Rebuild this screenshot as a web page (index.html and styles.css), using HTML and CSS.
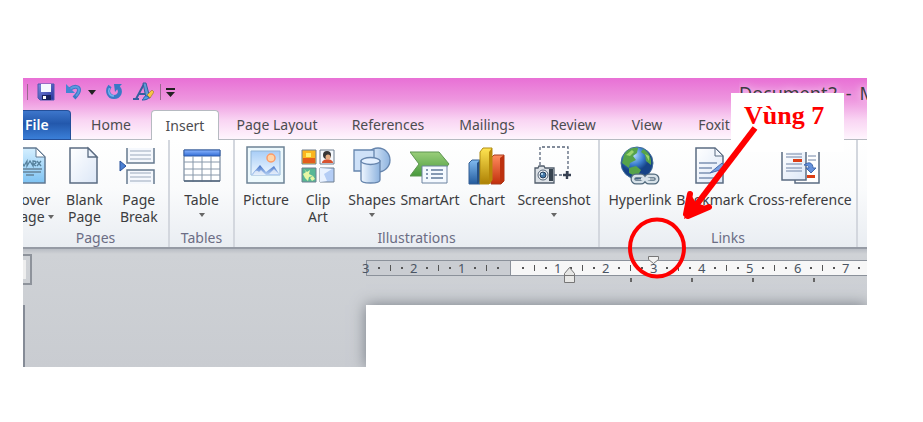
FILE: index.html
```html
<!DOCTYPE html>
<html lang="en">
<head>
<meta charset="utf-8">
<title>Document2</title>
<link rel="stylesheet" href="styles.css">
</head>
<body>
<main class="figure">
<div class="window">
<header class="top">
  <div class="titlebar">
    <div class="quick">
      <i class="sep"></i>
      <button class="q-save" aria-label="Save"><svg width="18" height="18" viewBox="0 0 18 18"><defs><linearGradient id="sv" x2="1" y2="1"><stop stop-color="#7c8bdd"/><stop offset="1" stop-color="#25329b"/></linearGradient></defs><path d="M1 1h16v16H3l-2-2z" fill="url(#sv)" stroke="#4c58b0"/><path d="M4 1h10v8H4z" fill="#f4f8ff"/><path d="M5 12h9v5H5z" fill="#18225d"/><path d="M6 13h3v3H6z" fill="#fff"/></svg></button>
      <button class="q-undo" aria-label="Undo"><svg width="17" height="18" viewBox="0 0 17 18"><path d="M5 6c4-3 9-3 9 1 0 3-2 5-5 8" fill="none" stroke="#3b78c6" stroke-width="4"/><path d="M5 6c4-3 9-3 9 1 0 2-1 4-3 6" fill="none" stroke="#5c9ae0" stroke-width="2"/><path d="M1 1v9h9z" fill="#4386d4"/></svg></button>
      <button class="q-more" aria-label="Undo list"><svg width="8" height="5" viewBox="0 0 8 5"><path d="M0 0h8L4 5z" fill="#222"/></svg></button>
      <button class="q-redo" aria-label="Repeat"><svg width="17" height="18" viewBox="0 0 17 18"><path d="M4 3c-4 5-1 11 4 11s8-5 4-10" fill="none" stroke="#397bc7" stroke-width="4"/><path d="M3.500 5c-2 4 0 8 4.500 8" fill="none" stroke="#72b1ee" stroke-width="1.600"/><path d="M8 1h8l-3 3-4 5z" fill="#3978c5"/></svg></button>
      <button class="q-font" aria-label="Text effects"><svg width="21" height="20" viewBox="0 0 21 20"><path d="M0 17h6M3 17L11 2M6 12h8" fill="none" stroke="#345f9f" stroke-width="2"/><path d="M10 1h3l4 15h-4z" fill="#5d9bd6" stroke="#345f9f"/><path d="M14 13l5-5 2 2-4 6z" fill="#f7c544" stroke="#997027" stroke-width=".6"/><path d="M9 18c2-1 2-5 5-4s2 4-5 4z" fill="#4f9de6" stroke="#2461a6"/></svg></button>
      <i class="sep"></i>
      <button class="q-custom" aria-label="Customize toolbar"><svg width="9" height="9" viewBox="0 0 9 9"><path d="M0 0h9v2H0zM0 4h9L4.500 9z" fill="#222"/></svg></button>
    </div>
    <h1 class="title"><span>Document2</span><span>-</span><span>M</span></h1>
  </div>
  <nav class="tabs">
    <button class="tab file"><span>File</span></button>
    <button class="tab">Home</button>
    <button class="tab active">Insert</button>
    <button class="tab">Page Layout</button>
    <button class="tab">References</button>
    <button class="tab">Mailings</button>
    <button class="tab">Review</button>
    <button class="tab">View</button>
    <button class="tab">Foxit</button>
  </nav>
</header>

<div class="ribbon">
  <section class="group">
    <div class="tools pages">
      <button class="tool cut"><svg class="icon" width="40" height="40" viewBox="0 0 40 40"><defs><linearGradient id="cv" x2="0" y2="1"><stop stop-color="#d5efff"/><stop offset="1" stop-color="#7ec3f3"/></linearGradient></defs><path d="M0 2h26l9 9v26H0z" fill="url(#cv)" stroke="#607891" stroke-width="1.500"/><path d="M26 2v9h9z" fill="#fff" stroke="#607891"/><path d="M8 20l3-5 3 5 3-5v5l3-5 3 5v-5c4 0 4 3 0 3l3 2M27 15l4 5M31 15l-4 5" fill="none" stroke="#56819c" stroke-width="1.300"/><path d="M7 23h25M11 26h20M16 29h8" stroke="#66849a" stroke-width="1.500"/></svg><span>Cover</span><span class="drop">Page <b></b></span></button>
      <button class="tool"><svg class="icon" width="40" height="40" viewBox="0 0 40 40"><defs><linearGradient id="pg" x2="1" y2="1"><stop stop-color="#fff"/><stop offset="1" stop-color="#dce7f7"/></linearGradient></defs><path d="M6 2h18l9 9v26H6z" fill="url(#pg)" stroke="#5b6c82" stroke-width="1.500"/><path d="M24 2v9h9z" fill="#edf4fd" stroke="#5b6c82" stroke-width="1.300"/></svg><span>Blank</span><span>Page</span></button>
      <button class="tool"><svg class="icon" width="40" height="40" viewBox="0 0 40 40"><g fill="#f5f8fd" stroke="#65798f"><path d="M8 2v15h27V2M8 38V24h27v14" stroke-width="1.500"/><path d="M11 5h21M11 9h21M11 13h21M11 27h21M11 31h21M11 35h21" stroke="#9ba9bc"/></g><path d="M1 15l6 5-6 5z" fill="#4b80d4" stroke="#28509a"/></svg><span>Page</span><span>Break</span></button>
    </div>
    <h2>Pages</h2>
  </section>
  <section class="group">
    <div class="tools single">
      <button class="tool"><svg class="icon" width="40" height="40" viewBox="0 0 40 40"><defs><linearGradient id="tb" x2="0" y2="1"><stop stop-color="#8bb5ff"/><stop offset="1" stop-color="#306bd5"/></linearGradient></defs><path d="M2 4h36v31H2z" fill="#fff" stroke="#61758c"/><path d="M2 4h36v6H2z" fill="url(#tb)" stroke="#315ca9"/><path d="M2 16h36M2 23h36M2 29h36M11 10v26M20 10v26M29 10v26" stroke="#8898aa"/><path d="M2 35h36" stroke="#53667d" stroke-width="1.500"/></svg><span>Table</span><b></b></button>
    </div>
    <h2>Tables</h2>
  </section>
  <section class="group">
    <div class="tools art">
      <button class="tool"><svg class="icon" width="40" height="40" viewBox="0 0 40 40"><defs><linearGradient id="sky" x2="0" y2="1"><stop stop-color="#a8cdf7"/><stop offset="1" stop-color="#eff8ff"/></linearGradient><linearGradient id="mt" x2="0" y2="1"><stop stop-color="#416fc7"/><stop offset="1" stop-color="#b6d2f4"/></linearGradient></defs><path d="M1 1h37v36H1z" fill="#edf9fd" stroke="#6d8395" stroke-width="1.500"/><path d="M5 5h29v24H5z" fill="url(#sky)" stroke="#91b3d5"/><circle cx="25" cy="12" r="4" fill="#ffd5a9" stroke="#fc9b68" stroke-width="1.500"/><path d="M5 29l9-10 6 7 8-6 6 9z" fill="url(#mt)"/><path d="M7 29c2-5 4-5 6-3l2-2 5 5zM23 28l5-5 5 5z" fill="#fff" fill-opacity=".65"/></svg><span>Picture</span></button>
      <button class="tool"><svg class="icon" width="40" height="40" viewBox="0 0 40 40"><path d="M4 4h14v14H4z" fill="#fbb51e" stroke="#6e7e90"/><path d="M5 12h12v5H5z" fill="#e35c1d"/><path d="M8 7h5v4H8z" fill="#fff06c"/><path d="M22 4h14v14H22z" fill="#f7fafe" stroke="#6e7e90"/><path d="M24 17c0-5 11-5 11 0z" fill="#d7522f"/><circle cx="29" cy="9" r="4" fill="#373536"/><circle cx="30" cy="11" r="2.500" fill="#e5ad83"/><path d="M4 22h14v14H4z" fill="#58b795" stroke="#6e7e90"/><path d="M6 23l3 3 3-2-1 4 4 2-4 1-1 4-3-3-2-4 3-2zM15 30l2 3-3 2-2-3z" fill="#e8f7a4"/><path d="M22 22h14v14H22z" fill="#b4cdf5" stroke="#6e7e90"/><path d="M22 22l12 1-8 5 3 7-7 1z" fill="#e9f2ff"/></svg><span>Clip</span><span>Art</span></button>
      <button class="tool"><svg class="icon" width="40" height="40" viewBox="0 0 40 40"><defs><linearGradient id="sh" x2="1"><stop stop-color="#f0f7ff"/><stop offset="1" stop-color="#8db3df"/></linearGradient></defs><circle cx="26" cy="14" r="12" fill="url(#sh)" stroke="#6685ad" stroke-width="1.300"/><path d="M2 4h20v21H2z" fill="#cee1f8" stroke="#6685ad" stroke-width="1.300"/><path d="M9 15v19c0 4 19 4 19 0V15z" fill="url(#sh)" stroke="#6685ad" stroke-width="1.300"/><ellipse cx="18.500" cy="15" rx="9.500" ry="3.500" fill="#e4f0ff" stroke="#6685ad" stroke-width="1.300"/></svg><span>Shapes</span><b></b></button>
      <button class="tool"><svg class="icon" width="40" height="40" viewBox="0 0 40 40"><defs><linearGradient id="sm" x2="0" y2="1"><stop stop-color="#9ace7a"/><stop offset="1" stop-color="#489a3c"/></linearGradient></defs><path d="M0 6h29l10 12-10 12H0l9-12z" fill="url(#sm)" stroke="#5d9550"/><path d="M12 20h25v17H12z" fill="#f4f9ff" stroke="#6c83a0"/><path d="M21 24h12M21 28h12M21 32h12M16 24h2M16 28h2M16 32h2" stroke="#60799a" stroke-width="1.500"/></svg><span>SmartArt</span></button>
      <button class="tool"><svg class="icon" width="40" height="40" viewBox="0 0 40 40"><defs><linearGradient id="bl" x2="0" y2="1"><stop stop-color="#80baf0"/><stop offset="1" stop-color="#245b9d"/></linearGradient><linearGradient id="yl" x2="0" y2="1"><stop stop-color="#ffe451"/><stop offset="1" stop-color="#ad8004"/></linearGradient><linearGradient id="rd" x2="0" y2="1"><stop stop-color="#ff8c5e"/><stop offset="1" stop-color="#c12e0b"/></linearGradient></defs><path d="M2 17l3-3h8v24H2z" fill="url(#bl)" stroke="#355f93"/><path d="M10 17l3-3v21l-3 3z" fill="#255086"/><path d="M24 12l3-3h10v26l-3 3H24z" fill="url(#rd)" stroke="#a63b20"/><path d="M33 12l4-3v26l-4 3z" fill="#bd310f"/><path d="M13 6l3-4h9v32l-3 4h-9z" fill="url(#yl)" stroke="#b18c12"/><path d="M22 6l3-4v32l-3 4z" fill="#b78808"/></svg><span>Chart</span></button>
      <button class="tool"><svg class="icon" width="40" height="40" viewBox="0 0 40 40"><path d="M6 19V1h28v28H20" fill="none" stroke="#59667a" stroke-width="1.300" stroke-dasharray="3 2"/><path d="M29 29h8M33 25v8" stroke="#374152" stroke-width="2.400"/><path d="M1 22h3l1-2h5l1 2h9v15H1z" fill="#dce1e6" stroke="#525e6c" stroke-width="1.300"/><path d="M15 23h4v12h-4z" fill="#36434f"/><circle cx="9" cy="29" r="5" fill="#f6f9fc" stroke="#526174"/><circle cx="9" cy="29" r="3" fill="#4579a9" stroke="#253c58"/><circle cx="8" cy="28" r="1" fill="#cbecff"/></svg><span>Screenshot</span><b></b></button>
    </div>
    <h2>Illustrations</h2>
  </section>
  <section class="group">
    <div class="tools links">
      <button class="tool"><svg class="icon" width="40" height="40" viewBox="0 0 40 40"><defs><radialGradient id="gl" cx=".4" cy=".25"><stop stop-color="#b5dcff"/><stop offset=".6" stop-color="#3d80d1"/><stop offset="1" stop-color="#164387"/></radialGradient></defs><circle cx="17" cy="17" r="16" fill="url(#gl)" stroke="#426c98"/><path d="M4 9C7 3 13 1 18 2l-1 5-4 3 3 4-6 3-1 5-7-5zM23 3c6 3 9 9 8 16l-5-4-1-6-4-3zM9 22l7-2 5 4-4 7-8-4z" fill="#56a34a"/><path d="M6 9l6-5 2 2-4 4zM25 8l4 2v5z" fill="#9bd56c"/><g fill="none" stroke="#526a7d" stroke-width="5"><rect x="13" y="30" width="11" height="6" rx="3"/><rect x="26" y="30" width="11" height="6" rx="3"/></g><g fill="none" stroke="#d7e2e9" stroke-width="2.500"><rect x="13" y="30" width="11" height="6" rx="3"/><rect x="26" y="30" width="11" height="6" rx="3"/><path d="M21 33h9"/></g></svg><span>Hyperlink</span></button>
      <button class="tool"><svg class="icon" width="40" height="40" viewBox="0 0 40 40"><path d="M6 2h19l8 8v27H6z" fill="url(#pg)" stroke="#5b6c82" stroke-width="1.500"/><path d="M25 2v8h8z" fill="#f3f7fd" stroke="#5b6c82"/><path d="M9 17h18M9 22h13M9 27h11M9 32h18" stroke="#7c91b2" stroke-width="1.300"/><path d="M20 27l12-10 5 6-7 1-10 3" fill="#789edf" stroke="#4668a9"/></svg><span>Bookmark</span></button>
      <button class="tool"><svg class="icon" width="40" height="40" viewBox="0 0 40 40"><path d="M15 5h24v32H15z" fill="#fff" stroke="#5b6c82" stroke-width="1.500"/><path d="M2 5h24v29H2z" fill="url(#pg)" stroke="#5b6c82" stroke-width="1.500"/><path d="M6 8h16M6 11h16M6 18h16M6 22h16M6 25h16M28 10h8M28 14h8" stroke="#7184a6"/><path d="M13 13h9v3h-9zM27 29h8v3h-8z" fill="#dd3e15"/><path d="M24 19c5-4 9-2 9 3h3l-5 5-5-5h3c0-2-2-3-5-3z" fill="#6591db" stroke="#4269ad"/></svg><span>Cross-reference</span></button>
    </div>
    <h2>Links</h2>
  </section>
</div>

<div class="workspace">
  <div class="side"><i class="corner"></i><i class="vrule"></i></div>
  <div class="canvas">
    <div class="ruler">
      <ol class="units"><li>3</li><li>2</li><li>1</li><li></li><li>1</li><li>2</li><li>3</li><li>4</li><li>5</li><li>6</li><li>7</li></ol>
      <svg class="indent left" width="13" height="18" viewBox="0 0 13 18"><path d="M1.500 7.500l5-6 5 6v9h-10z" fill="#e7e7e5" stroke="#777"/><path d="M1 9.500h11" stroke="#777"/></svg>
      <svg class="indent first" width="13" height="10" viewBox="0 0 13 10"><path d="M1.500 1.500h10v3l-5 4-5-4z" fill="#f1f1f1" stroke="#777"/></svg>
    </div>
    <div class="ticks"></div>
    <article class="page"></article>
  </div>
</div>
</div>
<aside class="callout">Vùng 7</aside>
<svg class="marks" width="136" height="156" viewBox="0 0 136 156" aria-hidden="true"><g fill="none" stroke="#f00"><ellipse cx="29" cy="124" rx="27" ry="28.500" stroke-width="4"/><path d="M127 4L66 84" stroke-width="6"/></g><path d="M62 69l-6 26 25-12-13-4z" fill="#f00"/><path d="M62 70l-4 20M60 92l21-9" fill="none" stroke="#f00" stroke-width="6" stroke-linecap="round"/></svg>
</main>
</body>
</html>
```
FILE: styles.css
```css
* { box-sizing: border-box; }
body { margin: 0; background: #fff; color: #3c3c40; font: 14px/17px "Noto Sans", "Open Sans", sans-serif; }
button { border: 0; margin: 0; padding: 0; background: none; color: inherit; font: inherit; white-space: nowrap; }
svg { display: block; }
h1, h2, ol { margin: 0; padding: 0; font-weight: 400; }
.figure { position: relative; padding: 78px 56px 56px 23px; }
.window { overflow: hidden; background: #cdd0d5; }

.top { background: linear-gradient(#e870d5, #ee96df 35%, #f9d5f3 68%, #fff7fe); }
.titlebar { display: flex; justify-content: space-between; height: 32px; }
.quick { display: flex; align-items: center; height: 28px; padding-left: 4px; }
.sep { width: 1px; height: 16px; background: #99698f; }
.q-save { margin-left: 9px; }
.q-undo { margin-left: 10px; }
.q-more { margin-left: 6px; }
.q-redo { margin-left: 10px; }
.q-font { margin: 0 6px 0 10px; }
.q-custom { margin-left: 5px; }
.title { display: flex; gap: 8px; flex: 0 0 128px; overflow: hidden; white-space: nowrap; font-size: 18px; line-height: 30px; text-shadow: 0 0 8px #fff; }
.tabs { display: grid; grid-template-columns: 48fr 80fr 68fr 116fr 106fr 92fr 80fr 68fr 66fr 120fr; height: 30px; box-shadow: inset 0 -1px #b6bac1; }
.tab { min-width: 0; height: 30px; padding-bottom: 1px; color: #4c4c50; }
.file { display: flex; align-items: center; padding-left: 2px; background: linear-gradient(#3d76cb, #2358ac 45%, #3a7fd8); border: 1px solid #244f99; border-left: 0; border-radius: 0 4px 0 0; color: #fff; font-weight: 600; }
.active { background: #fff; border: 1px solid #b6bac1; border-bottom: 0; border-radius: 4px 4px 0 0; }

.ribbon { display: grid; grid-template-columns: 147fr 65fr 365fr 258fr 9fr; height: 109px; background: linear-gradient(#fff, #fafbfc 45%, #e9edf2); border-bottom: 2px solid #969ba5; }
.group { display: flex; flex-direction: column; min-width: 0; border-right: 2px solid #d3d7de; }
.tools { display: grid; flex: 1; padding-top: 6px; }
.pages { grid-template-columns: 36fr 50fr 58fr; }
.single { grid-template-columns: 1fr; }
.art { grid-template-columns: 52fr 52fr 56fr 60fr 54fr 80fr; padding: 6px 4px 0 5px; }
.links { grid-template-columns: 72fr 68fr 112fr; padding-left: 4px; }
.tool { display: flex; flex-direction: column; align-items: center; min-width: 0; }
.icon { flex: none; margin-bottom: 5px; }
.cut { align-items: flex-end; padding-right: 9px; }
.drop { margin-right: -4px; }
.tool b { display: inline-block; width: 0; height: 0; border: 3px solid transparent; border-top: 4px solid #666; border-bottom: 0; }
.tool > b { margin-top: 5px; }
.drop b { margin-bottom: 3px; }
.group h2 { color: #6b6d84; font-size: 14px; line-height: 18px; text-align: center; }

.workspace { display: flex; height: 118px; background: linear-gradient(#b9bdc4, #cfd2d6 5px, #c9ccd1); }
.side { flex: none; width: 343px; }
.corner { display: block; width: 9px; height: 31px; margin-top: 5px; border: 2px solid #8e939b; border-left: 0; background: linear-gradient(#eee, #eee) 0 4px / 3px 19px no-repeat; }
.vrule { display: block; width: 2px; height: 62px; margin-top: 20px; background: #858b96; }
.canvas { flex: 1; min-width: 0; padding-top: 11px; }
.ruler { position: relative; height: 16px; border: 1px solid #8b919a; border-right: 0; background: linear-gradient(90deg, #cacdd2 143px, #8b919a 143px 144px, #f7f7f7 144px); }
.units { display: flex; width: 100%; height: 14px; list-style: none; font-size: 13px; line-height: 14px; color: #4b5563; clip-path: inset(0 0 0 -8px); }
.units li { flex: none; width: 48px; background: linear-gradient(#555, #555) 11px 6px / 2px 2px no-repeat, linear-gradient(#555, #555) 23px 4px / 1px 6px no-repeat, linear-gradient(#555, #555) 34px 6px / 2px 2px no-repeat; }
.units li::first-letter { margin-left: -5px; }
.indent { position: absolute; }
.left { left: 196px; top: 5px; }
.first { left: 280px; top: -6px; }
.ticks { height: 29px; background: linear-gradient(90deg, #666 2px, transparent 2px) 264px 2px / 61px 4px repeat-x; clip-path: inset(0 0 0 263px); }
.page { height: 62px; background: #fff; box-shadow: 0 0 14px #777d86; }

.callout { position: absolute; top: 93px; right: 79px; width: 113px; height: 59px; padding-left: 13px; background: #fff; color: #f00; font: bold 26px/45px "Liberation Serif", serif; white-space: nowrap; }
.marks { position: absolute; top: 124px; right: 159px; }
```
